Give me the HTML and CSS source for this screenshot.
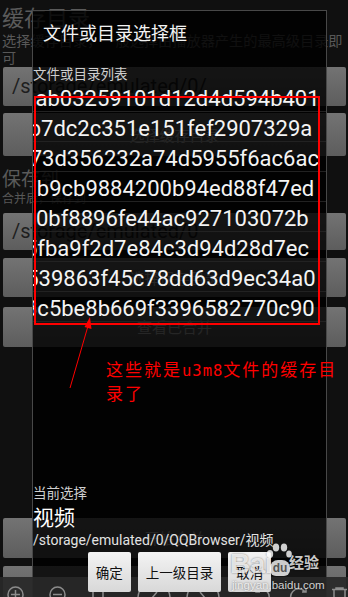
FILE: index.html
```html
<!DOCTYPE html>
<html lang="zh">
<head>
<meta charset="utf-8">
<title>文件或目录选择框</title>
<link rel="stylesheet" href="styles.css">
</head>
<body>
<div class="screen">
  <div class="bg">
    <div class="cat cat-lg">缓存目录</div>
    <div class="desc">选择缓存目录，一般选择由播放器产生的最高级目录即可</div>
    <div class="box input box1">/storage/emulated/0/</div>
    <div class="box btnbox box2">选择缓存目录</div>
    <div class="cat cat-md">保存到</div>
    <div class="desc desc-sm">合并后，保存到</div>
    <div class="box input box3">/storage/emulated/0</div>
    <div class="box btnbox box4">选择保存目录</div>
    <div class="box btnbox box5">查看已合并</div>
    <div class="box btnbox box6">开始合并</div>
    <div class="box btnbox box7"></div>
  </div>

  <div class="toolbar">
    <svg width="348" height="20" viewBox="0 0 348 20" fill="none" stroke="#8c8c8c" stroke-width="1.5">
      <circle cx="15.5" cy="17.5" r="7.5"/>
      <path d="M15.5 13v9M11 17.5h9"/>
      <circle cx="57.5" cy="17.5" r="7.5"/>
      <path d="M53 17.5h9"/>
      <path d="M93 10.5h6l4 4v8H93z"/>
      <circle cx="154" cy="21" r="16"/>
      <path d="M157 15l-5 6 5 6"/>
      <circle cx="203" cy="21" r="16"/>
      <path d="M200 15l5 6-5 6"/>
      <path d="M257 15a7 7 0 1 1 -1 8M256 11v4h4"/>
      <path d="M305 15a8 8 0 1 0 1 8M306 11v4h-4"/>
      <path d="M332 12.5h15M336 12.5v-1.5h7v1.5M334 12.5v10h11v-10"/>
    </svg>
  </div>

  <div class="dialog">
    <div class="d-title">文件或目录选择框</div>
    <div class="d-label">文件或目录列表</div>
    <div class="list">
      <div class="row o1">ab03259101d12d4d594b401</div>
      <div class="row o2">b7dc2c351e151fef2907329a</div>
      <div class="row o3">73d356232a74d5955f6ac6ac</div>
      <div class="row o4">b9cb9884200b94ed88f47ed</div>
      <div class="row o5">0bf8896fe44ac927103072b</div>
      <div class="row o6">5fba9f2d7e84c3d94d28d7ec</div>
      <div class="row o7">539863f45c78dd63d9ec34a0</div>
      <div class="row o8">3c5be8b669f3396582770c90</div>
    </div>
    <div class="d-bottom">
      <div class="cur-label">当前选择</div>
      <div class="cur-name">视频</div>
      <div class="cur-path">/storage/emulated/0/QQBrowser/视频</div>
      <div class="btns">
        <div class="btn">确定</div>
        <div class="btn">上一级目录</div>
        <div class="btn">取消</div>
      </div>
    </div>
  </div>

  <div class="redbox"></div>
  <svg class="arrow" width="348" height="597" viewBox="0 0 348 597">
    <path d="M70 388L88 326" stroke="#ff0000" stroke-width="1" fill="none"/>
    <path d="M90 317L91.5 329L84.5 327Z" fill="#ff0000"/>
  </svg>
  <div class="note">这些就是<span class="note-latin">u3m8</span>文件的缓存目<br>录了</div>

  <div class="wm">
    <div class="wm-top">
      <span class="wm-bai">Bai</span>
      <span class="paw">
        <svg class="toes" width="26" height="16" viewBox="0 0 26 16">
          <ellipse cx="4" cy="11" rx="3.2" ry="4"/>
          <ellipse cx="10" cy="4.5" rx="3.2" ry="4"/>
          <ellipse cx="18" cy="4.5" rx="3.2" ry="4"/>
          <ellipse cx="23" cy="11" rx="2.8" ry="3.6"/>
        </svg>
        <span class="du">du</span>
      </span>
      <span class="wm-jy">经验</span>
    </div>
    <div class="wm-url">jingyan.baidu.com</div>
  </div>
</div>
</body>
</html>
```

FILE: styles.css
```css
html, body {
  margin: 0;
  padding: 0;
  overflow: hidden;
  background: #101010;
}

.screen {
  position: relative;
  width: 348px;
  height: 597px;
  overflow: hidden;
  background: #101010;
  font-family: Roboto, "Noto Sans CJK SC", sans-serif;
}

/* ---------- background settings screen ---------- */
.bg {
  padding-top: 1px;
}

.cat {
  color: #5a5a5a;
  padding-left: 2px;
  font-family: "Noto Sans CJK SC", sans-serif;
}

.cat-lg {
  font-size: 22px;
  line-height: 30px;
}

.cat-md {
  font-size: 19px;
  line-height: 24px;
  margin-top: 10px;
}

.desc {
  font-family: "Noto Sans CJK SC", sans-serif;
  font-size: 14.2px;
  line-height: 17px;
  color: #585858;
  padding-left: 2px;
  margin-top: 1px;
}

.desc-sm {
  font-size: 12px;
  line-height: 16px;
  margin-top: 0;
}

.box {
  margin: 0 2px 0 3px;
  background: linear-gradient(#737373, #5d5d5d);
  border-radius: 2px;
  box-sizing: border-box;
}

.input {
  font-family: Roboto, sans-serif;
  font-size: 20px;
  color: #1e1e1e;
  padding-left: 9px;
}

.btnbox {
  text-align: center;
  font-family: "Noto Sans CJK SC", sans-serif;
  font-size: 15px;
  color: #cfcfcf;
}

.box1 { margin-top: 1px; height: 39px; line-height: 39px; }
.box2 { margin-top: 7px; height: 43px; line-height: 43px; }
.box3 { margin-top: 7px; height: 37px; line-height: 37px; }
.box4 { margin-top: 8px; height: 39px; line-height: 39px; }
.box5 { margin-top: 10px; height: 40px; line-height: 40px; }
.box6 { margin-top: 171px; height: 40px; line-height: 40px; }
.box7 { margin-top: 8px; height: 40px; }

/* ---------- bottom toolbar (overlay band) ---------- */
.toolbar {
  position: absolute;
  left: 0;
  top: 577px;
  width: 348px;
  height: 20px;
  background: rgba(40, 40, 40, 0.92);
  z-index: 1;
}

.toolbar svg {
  display: block;
}

/* ---------- dialog ---------- */
.dialog {
  position: absolute;
  left: 32px;
  top: 10px;
  width: 295px;
  height: 587px;
  box-sizing: border-box;
  border: 1px solid #484848;
  border-bottom: none;
  background: rgba(0, 0, 0, 0.82);
  display: flex;
  flex-direction: column;
}

.d-title {
  font-family: "Noto Sans CJK SC", sans-serif;
  font-size: 18px;
  line-height: 24px;
  color: #f2f2f2;
  padding: 9px 10px 20px;
}

.d-label {
  font-family: "Noto Sans CJK SC", sans-serif;
  font-size: 13.5px;
  line-height: 18px;
  color: #cfcfcf;
}

.list {
  overflow: hidden;
}

.row {
  height: 30px;
  box-sizing: border-box;
  border-bottom: 1px solid #222;
  padding-top: 5px;
  line-height: 24px;
  font-family: Roboto, sans-serif;
  font-size: 22px;
  color: #f4f4f4;
  white-space: nowrap;
  overflow: hidden;
}

.o1 { text-indent: 2.5px; }
.o2 { text-indent: -4.3px; }
.o3 { text-indent: -3.3px; }
.o4 { text-indent: 3.8px; }
.o5 { text-indent: 3px; }
.o6 { text-indent: -8px; }
.o7 { text-indent: -6.8px; }
.o8 { text-indent: -8px; }

.d-bottom {
  margin-top: auto;
}

.cur-label {
  font-family: "Noto Sans CJK SC", sans-serif;
  font-size: 13.5px;
  line-height: 17px;
  color: #cfcfcf;
}

.cur-name {
  font-family: "Noto Sans CJK SC", sans-serif;
  font-size: 21px;
  line-height: 24px;
  color: #ffffff;
  margin-top: 3.5px;
}

.cur-path {
  font-size: 14px;
  line-height: 20px;
  color: #e2e2e2;
  margin-top: 2px;
  white-space: nowrap;
}

.btns {
  display: flex;
  justify-content: center;
  gap: 7px;
  margin-top: 2px;
  padding-bottom: 5px;
}

.btn {
  position: relative;
  z-index: 2;
  height: 40px;
  padding: 0 8px;
  font-family: "Noto Sans CJK SC", sans-serif;
  font-size: 13.5px;
  line-height: 40px;
  color: #111;
  background: linear-gradient(#f3f3f3, #d8d8d8);
  border-radius: 2px;
}

/* ---------- annotations ---------- */
.redbox {
  position: absolute;
  left: 34px;
  top: 96px;
  width: 286px;
  height: 229px;
  box-sizing: border-box;
  border: 2px solid #ff0000;
  z-index: 3;
}

.arrow {
  position: absolute;
  left: 0;
  top: 0;
  z-index: 3;
}

.note {
  position: absolute;
  left: 106px;
  top: 357.5px;
  font-family: "Noto Sans CJK SC", sans-serif;
  font-size: 17px;
  line-height: 21.5px;
  letter-spacing: 2px;
  color: #ff0000;
  white-space: nowrap;
  z-index: 3;
}

.note-latin {
  font-family: "DejaVu Sans Mono", monospace;
  font-size: 15.5px;
  letter-spacing: 1px;
}

/* ---------- watermark ---------- */
.wm {
  position: absolute;
  left: 230px;
  top: 542px;
  white-space: nowrap;
  z-index: 4;
  color: rgba(255, 255, 255, 0.8);
  text-shadow: 0 0 2px rgba(0, 0, 0, 0.5);
}

.wm-top {
  display: flex;
  align-items: flex-end;
  height: 36px;
}

.wm-bai {
  font-family: "Liberation Sans", sans-serif;
  font-weight: bold;
  font-size: 28px;
  line-height: 28px;
  letter-spacing: -0.5px;
}

.paw {
  position: relative;
  flex: none;
  width: 26px;
  height: 36px;
  margin-left: -6px;
}

.toes {
  position: absolute;
  left: 0;
  top: 1px;
  fill: rgba(255, 255, 255, 0.8);
}

.du {
  position: absolute;
  left: 4px;
  top: 18px;
  width: 20px;
  height: 16px;
  border-radius: 8px 8px 6px 6px;
  background: rgba(255, 255, 255, 0.8);
  color: #555;
  text-shadow: none;
  font-family: "Liberation Sans", sans-serif;
  font-weight: bold;
  font-size: 12px;
  line-height: 17px;
  text-align: center;
}

.wm-jy {
  font-family: "Noto Sans CJK SC", sans-serif;
  font-weight: bold;
  font-size: 15px;
  line-height: 20px;
  margin-left: -3px;
  margin-bottom: 6px;
}

.wm-url {
  font-family: "Liberation Sans", sans-serif;
  font-size: 11.5px;
  line-height: 14px;
  margin-left: 2px;
}
```
